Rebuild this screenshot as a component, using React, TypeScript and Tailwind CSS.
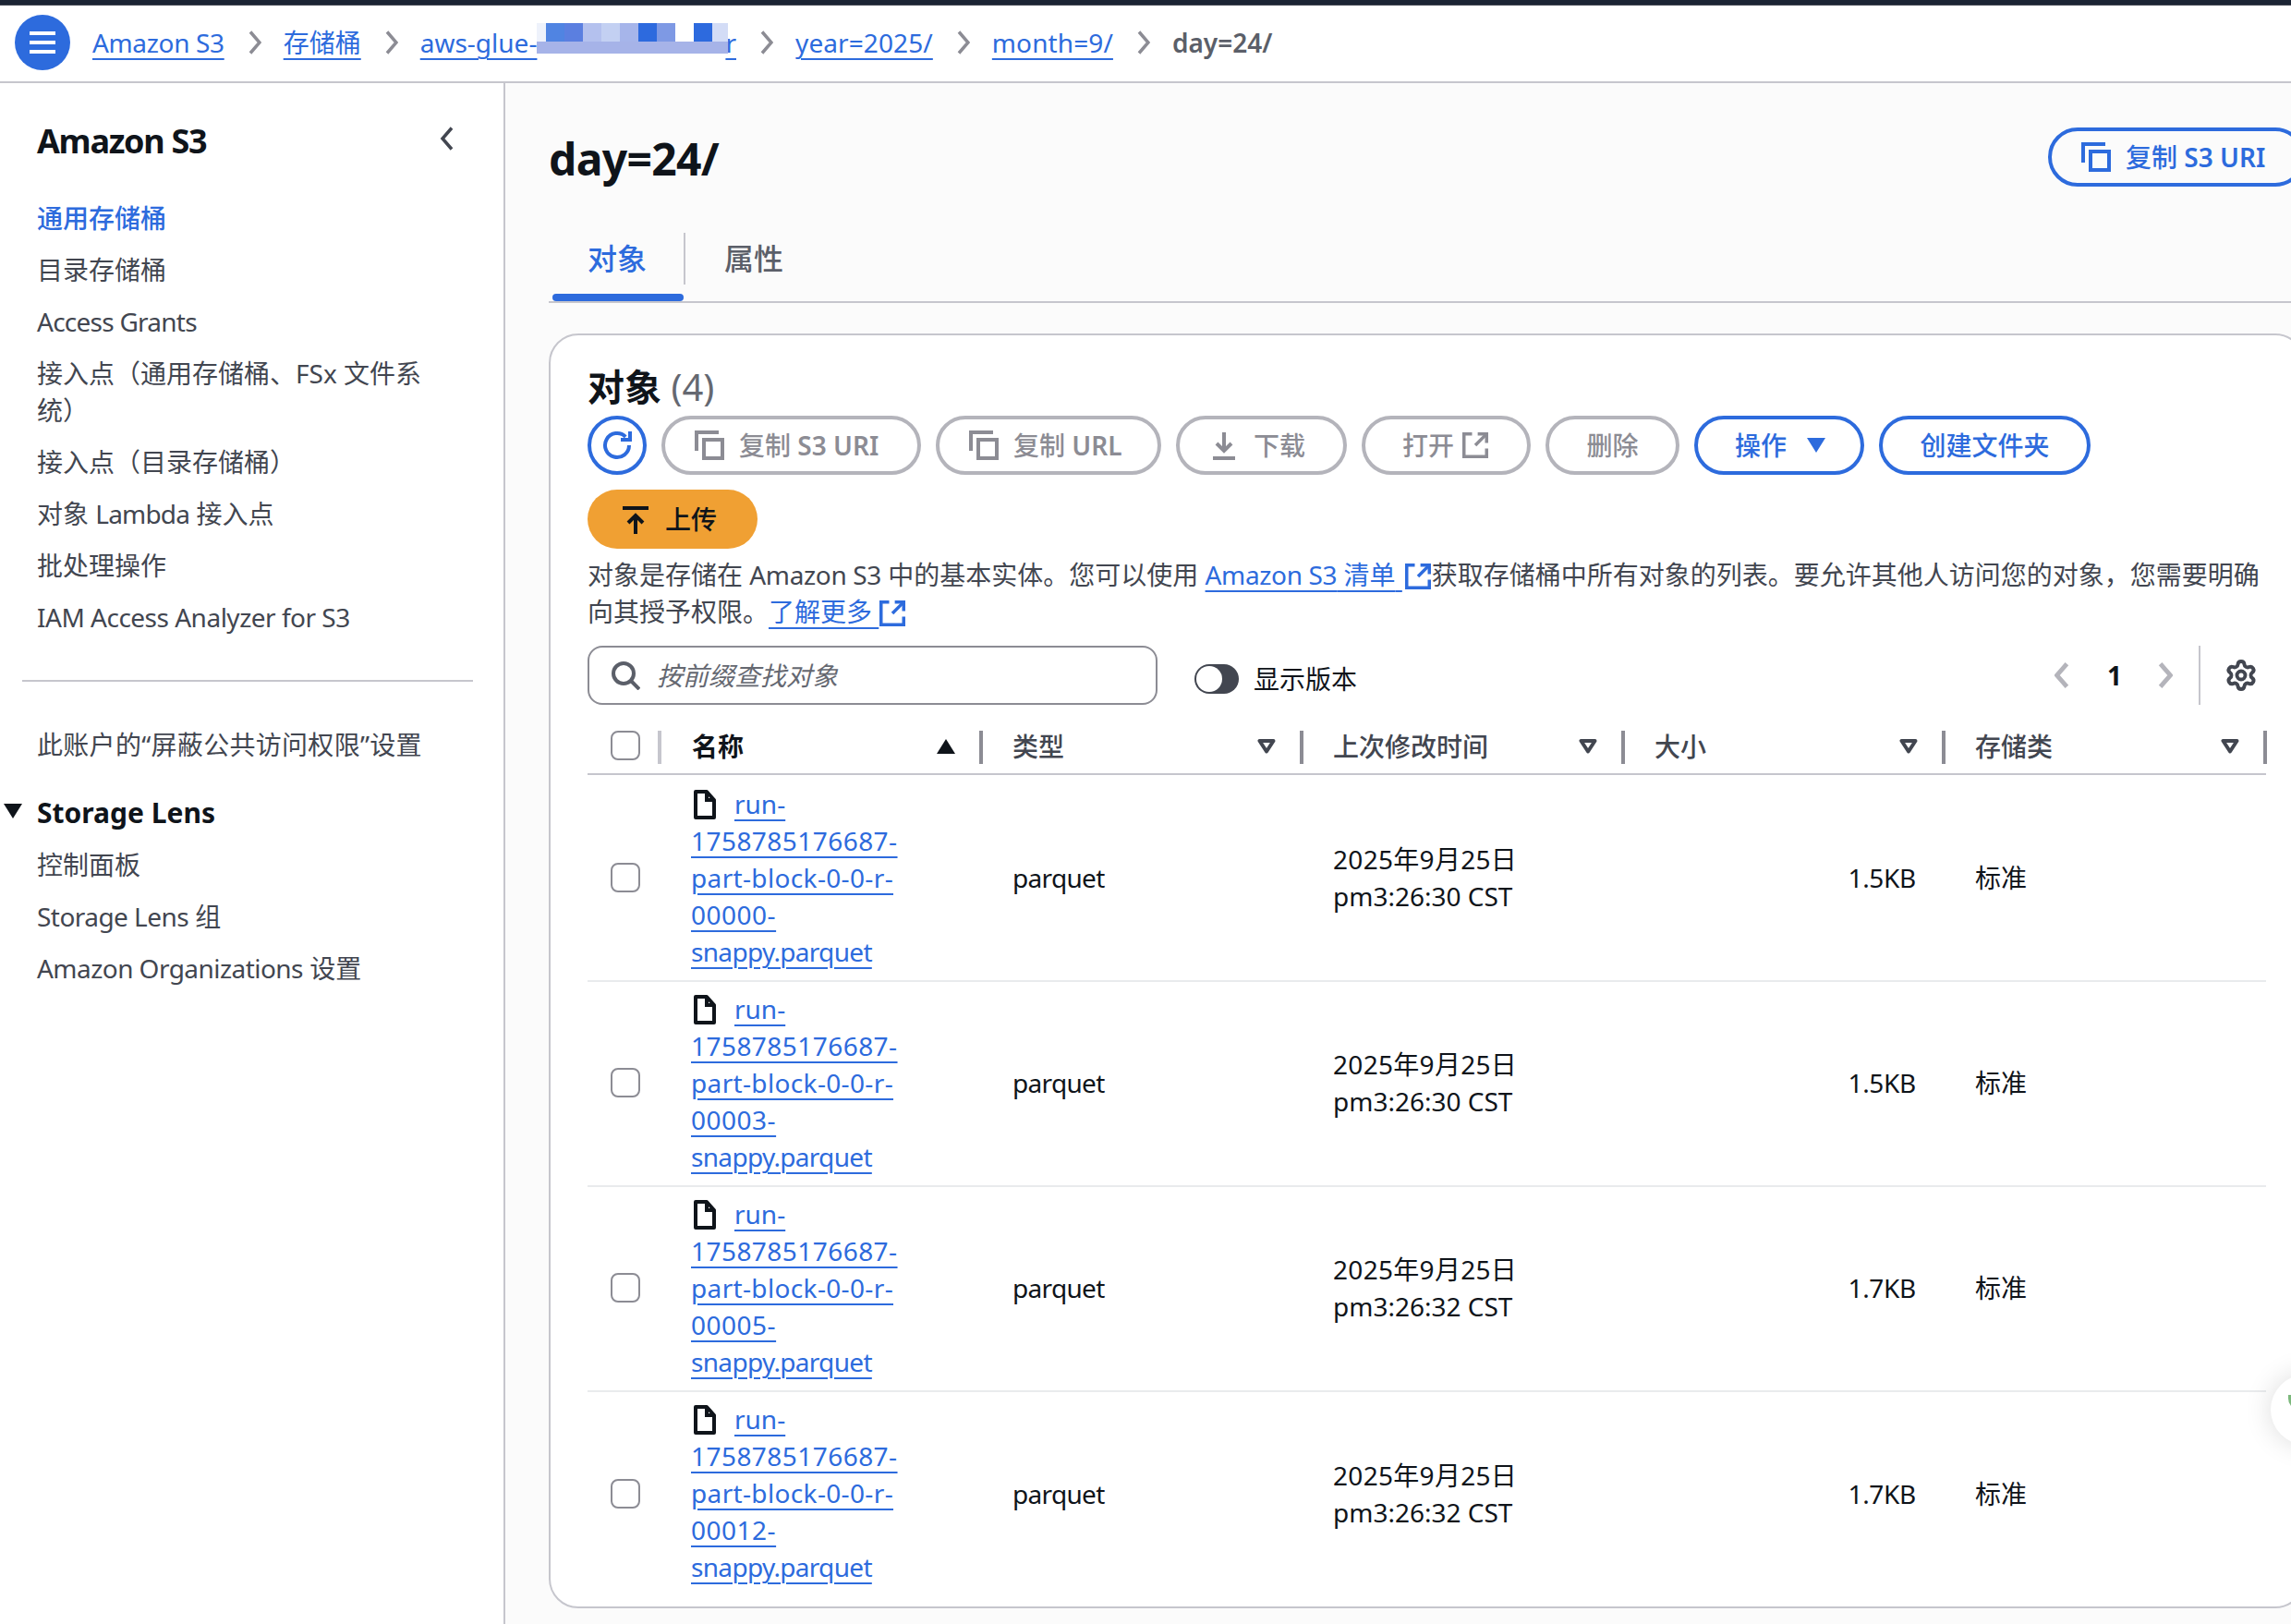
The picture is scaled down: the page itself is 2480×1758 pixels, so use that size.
import { Settings } from "lucide-react"

const rows = [
  { part: "00000", time: "pm3:26:30 CST", size: "1.5KB" },
  { part: "00003", time: "pm3:26:30 CST", size: "1.5KB" },
  { part: "00005", time: "pm3:26:32 CST", size: "1.7KB" },
  { part: "00012", time: "pm3:26:32 CST", size: "1.7KB" },
]

const columns = "grid grid-cols-[80px_348px_347px_348px_347px_348px]"
const linkText = "text-[#2d6bdd] underline decoration-2 underline-offset-[6px]"

function Chevron({ dir = "right", width = 3.5, className = "" }: { dir?: "left" | "right"; width?: number; className?: string }) {
  return (
    <svg viewBox="0 0 14 26" fill="none" stroke="currentColor" strokeWidth={width} className={className}>
      <path d={dir === "right" ? "M2 1.5 12 13 2 24.5" : "M12 1.5 2 13 12 24.5"} />
    </svg>
  )
}

function CopyIcon() {
  return (
    <svg viewBox="0 0 16 16" fill="none" stroke="currentColor" strokeWidth="2" className="w-8 h-8 shrink-0">
      <path d="M1 11V1h12" />
      <path d="M5 5h10v10H5z" />
    </svg>
  )
}

function ExternalIcon({ className = "" }: { className?: string }) {
  return (
    <svg viewBox="0 0 16 16" fill="none" stroke="currentColor" strokeWidth="2" className={className}>
      <path d="M6 1H1v14h14v-5" />
      <path d="M9.5 1H15v5.5" />
      <path d="M14.5 1.5 8 8" />
    </svg>
  )
}

function FilterCaret() {
  return (
    <svg viewBox="0 0 20 16" fill="none" stroke="currentColor" strokeWidth="4" className="w-5 h-4 text-[#424650] shrink-0">
      <path d="M2.5 2h15L10 13.5z" strokeLinejoin="round" />
    </svg>
  )
}

function Checkbox() {
  return <div className="w-8 h-8 rounded-lg border-2 border-[#8c8c94] bg-white" />
}

function OutlineButton({ disabled, className = "", children }: { disabled?: boolean; className?: string; children: React.ReactNode }) {
  return (
    <div
      className={`h-16 rounded-full border-4 flex items-center font-medium whitespace-nowrap ${
        disabled ? "border-[#b4b4bb] text-[#8c8c94]" : "border-[#2d6bdd] text-[#2d6bdd]"
      } ${className}`}
    >
      {children}
    </div>
  )
}

function Mosaic() {
  return (
    <span className="relative z-10 inline-flex flex-col mt-[-1px] h-[33px] w-[207px] shrink-0">
      <span className="flex h-5">
        <span className="w-[10px] bg-[#eef2fb]" />
        <span className="w-5 bg-[#5084e2]" />
        <span className="w-5 bg-[#5b7fe0]" />
        <span className="w-5 bg-[#b4c1ee]" />
        <span className="w-5 bg-[#c3d0f2]" />
        <span className="w-5 bg-[#a6b5ea]" />
        <span className="w-5 bg-[#2d6ade]" />
        <span className="w-5 bg-[#7e99e4]" />
        <span className="w-5 bg-white" />
        <span className="w-5 bg-[#2d6ade]" />
        <span className="w-[17px] bg-[#d3dcf6]" />
      </span>
      <span className="h-[13px] bg-[#a6b3e8]" />
    </span>
  )
}

function Sep() {
  return <Chevron className="w-[14px] h-[26px] ml-[26px] mr-6 text-[#8c8c94]" />
}

function Header() {
  return (
    <div className="h-[84px] shrink-0 bg-white border-b-2 border-[#c6c6cd] flex items-center pl-4 pb-[2px]">
      <div className="w-[60px] h-[60px] rounded-full bg-[#2d6bdd] flex flex-col items-center justify-center gap-[6px]">
        <span className="w-7 h-1 bg-white" />
        <span className="w-7 h-1 bg-white" />
        <span className="w-7 h-1 bg-white" />
      </div>
      <a className={`ml-6 tracking-[-0.35px] ${linkText}`}>Amazon S3</a>
      <Sep />
      <a className={linkText}>存储桶</a>
      <Sep />
      <a className={`${linkText} flex items-start h-10`}>
        aws-glue-
        <Mosaic />
        <span className="-ml-[3px]">r</span>
      </a>
      <Sep />
      <a className={`${linkText} tracking-[0.1px]`}>year=2025/</a>
      <Sep />
      <a className={`${linkText} tracking-[0.1px]`}>month=9/</a>
      <Sep />
      <span className="font-semibold text-[#5b5f69]">day=24/</span>
    </div>
  )
}

function Sidebar() {
  return (
    <aside className="w-[547px] shrink-0 bg-white border-r-2 border-[#c6c6cd] pl-10 pt-10 text-[#424650]">
      <div className="flex items-center justify-between w-[452px] h-11">
        <h2 className="text-[36px] leading-[44px] font-bold tracking-[-1.3px] text-[#0f141a] mt-[2px]">Amazon S3</h2>
        <Chevron dir="left" width={3.5} className="w-4 h-[26px] text-[#424650] mb-1" />
      </div>
      <nav className="mt-[42px] flex flex-col gap-4 w-[425px]">
        <a className="text-[#2d6bdd] font-medium">通用存储桶</a>
        <a>目录存储桶</a>
        <a className="tracking-[-0.75px]">Access Grants</a>
        <a>接入点（通用存储桶、FSx 文件系统）</a>
        <a>接入点（目录存储桶）</a>
        <a>
          对象 <span className="tracking-[-0.8px]">Lambda</span> 接入点
        </a>
        <a>批处理操作</a>
        <a className="tracking-[-0.5px]">IAM Access Analyzer for S3</a>
      </nav>
      <div className="mt-[48px] -ml-4 w-[488px] h-[2px] bg-[#c6c6cd]" />
      <a className="block mt-[48px] tracking-[0.3px]">此账户的“屏蔽公共访问权限”设置</a>
      <div className="mt-[34px] flex items-center -ml-9 font-bold text-[30px] text-[#0f141a]">
        <svg viewBox="0 0 20 16" className="w-5 h-4 mr-4 mb-1" fill="currentColor">
          <path d="M0 0h20L10 16z" />
        </svg>
        Storage Lens
      </div>
      <nav className="mt-4 flex flex-col gap-4">
        <a>控制面板</a>
        <a>
          <span className="tracking-[-0.55px]">Storage Lens</span> 组
        </a>
        <a>
          <span className="tracking-[-0.55px]">Amazon Organizations</span> 设置
        </a>
      </nav>
    </aside>
  )
}

function Toolbar() {
  return (
    <div className="flex flex-wrap gap-4 mt-[9px]">
      <div className="w-16 h-16 rounded-full border-4 border-[#2d6bdd] text-[#2d6bdd] flex items-center justify-center">
        <svg viewBox="0 0 16 16" fill="none" stroke="currentColor" strokeWidth="2" className="w-8 h-8">
          <path d="M14.5 8A6.5 6.5 0 1 1 12.6 3.4" />
          <path d="M10 5h5V.5" />
        </svg>
      </div>
      <OutlineButton disabled className="w-[281px] pl-8 gap-4">
        <CopyIcon />
        <span>
          复制 <span className="font-semibold">S3 URI</span>
        </span>
      </OutlineButton>
      <OutlineButton disabled className="w-[244px] pl-8 gap-4">
        <CopyIcon />
        <span>
          复制 <span className="font-semibold">URL</span>
        </span>
      </OutlineButton>
      <OutlineButton disabled className="w-[185px] pl-8 gap-4">
        <svg viewBox="0 0 16 16" fill="none" stroke="currentColor" strokeWidth="2" className="w-8 h-8 shrink-0">
          <path d="M2 15h12" />
          <path d="M8 1v10" />
          <path d="M4 7l4 4 4-4" />
        </svg>
        下载
      </OutlineButton>
      <OutlineButton disabled className="w-[183px] pl-10 gap-[9px]">
        打开
        <ExternalIcon className="w-7 h-7 shrink-0" />
      </OutlineButton>
      <OutlineButton disabled className="w-[145px] justify-center">
        删除
      </OutlineButton>
      <OutlineButton className="w-[184px] pl-10 gap-[22px]">
        操作
        <svg viewBox="0 0 20 16" className="w-5 h-4" fill="currentColor">
          <path d="M0 0h20L10 16z" />
        </svg>
      </OutlineButton>
      <OutlineButton className="w-[229px] justify-center">创建文件夹</OutlineButton>
      <div className="h-16 w-[184px] rounded-full bg-[#f0a033] flex items-center pl-9 gap-4 font-medium text-[#0f141a]">
        <svg viewBox="0 0 16 16" fill="none" stroke="currentColor" strokeWidth="2" className="w-8 h-8 shrink-0">
          <path d="M1 2h14" />
          <path d="M8 16V6" />
          <path d="M4 10l4-4 4 4" />
        </svg>
        上传
      </div>
    </div>
  )
}

function TableHead() {
  const heads = ["类型", "上次修改时间", "大小", "存储类"]
  return (
    <div className={`${columns} mt-7 h-12 border-b-2 border-[#c6c6cd] items-start font-medium text-[#424650]`}>
      <div className="h-9 pl-[25px] border-r-4 border-[#c6c6cd]">
        <Checkbox />
      </div>
      <div className="h-9 pl-[33px] pr-[26px] pb-[2px] border-r-4 border-[#8c8c94] flex items-center justify-between font-semibold text-[#0f141a]">
        名称
        <svg viewBox="0 0 20 16" className="w-5 h-4" fill="currentColor">
          <path d="M10 0l10 16H0z" />
        </svg>
      </div>
      {heads.map((head) => (
        <div key={head} className="h-9 pl-[32px] pr-[26px] pb-[2px] border-r-4 border-[#8c8c94] flex items-center justify-between">
          {head}
          <FilterCaret />
        </div>
      ))}
    </div>
  )
}

function TableRow({ part, time, size, last }: { part: string; time: string; size: string; last: boolean }) {
  const line = `block w-fit ${linkText}`
  return (
    <div className={`${columns} items-center h-[222px] pb-[3px] ${last ? "" : "border-b-2 border-[#e9ebed]"}`}>
      <div className="pl-[25px]">
        <Checkbox />
      </div>
      <div className="pl-[32px] self-start pt-[9px]">
        <div className="flex items-center h-10">
          <svg viewBox="0 0 24 32" fill="none" stroke="#0f141a" strokeWidth="4" className="ml-[3px] mr-5 w-6 h-8 mt-[2px]">
            <path d="M2 2h12l8 9v19H2z" strokeLinejoin="round" />
            <path d="M14 2v9h8" />
          </svg>
          <a className={line}>run-</a>
        </div>
        <a className={`${line} tracking-[0.45px]`}>1758785176687-</a>
        <a className={`${line} tracking-[0.35px]`}>part-block-0-0-r-</a>
        <a className={`${line} tracking-[0.5px]`}>{`${part}-`}</a>
        <a className={`${line} tracking-[-0.68px]`}>snappy.parquet</a>
      </div>
      <div className="pl-[32px] tracking-[-0.67px]">parquet</div>
      <div className="pl-[32px]">
        <div className="tracking-[0.3px]">2025年9月25日</div>
        <div>{time}</div>
      </div>
      <div className="pr-[32px] text-right tracking-[-0.3px]">{size}</div>
      <div className="pl-[32px]">标准</div>
    </div>
  )
}

function Main() {
  return (
    <main className="relative flex-1 min-w-0 overflow-hidden bg-[#fbfbfb] pl-[47px]">
      <div className="w-[1901px]">
        <div className="mt-[48px] flex items-center justify-between h-16">
          <h1 className="text-[48px] leading-[56px] font-bold tracking-[-0.7px] text-[#0f141a] mb-[-3px]">day=24/</h1>
          <OutlineButton className="w-[278px] pl-8 gap-[16px]">
            <CopyIcon />
            <span>
              复制 <span className="font-semibold">S3 URI</span>
            </span>
          </OutlineButton>
        </div>
        <div className="mt-[50px] flex h-[76px] border-b-2 border-[#c6c6cd]">
          <div className="ml-1 w-[144px] flex flex-col">
            <div className="h-14 pr-[2px] border-r-2 border-[#c6c6cd] flex items-center justify-center text-[32px] font-medium text-[#2d6bdd]">对象</div>
            <div className="mt-[10px] h-2 w-[142px] rounded-full bg-[#2d6bdd]" />
          </div>
          <div className="h-14 pl-[42px] flex items-center text-[32px] font-medium text-[#5b5f69]">属性</div>
        </div>

        <section className="mt-[33px] h-[1380px] rounded-[32px] border-2 border-[#c6c6cd] bg-white pl-10 pr-10 pt-[34px] text-[#0f141a]">
          <h2 className="text-[40px] leading-[44px] font-semibold">
            对象 <span className="font-normal text-[#656871]">(4)</span>
          </h2>
          <Toolbar />
          <div className="mt-2 text-[#424650]">
            <p className="whitespace-nowrap">
              对象是存储在 <span className="tracking-[-0.35px]">Amazon S3</span> 中的基本实体。您可以使用{" "}
              <a className={linkText}>
                <span className="tracking-[-0.35px]">Amazon S3</span> 清单{" "}
              </a>
              <ExternalIcon className="inline-block ml-[3px] mr-[1px] w-7 h-7 text-[#2d6bdd] align-[-5px]" />
              获取存储桶中所有对象的列表。要允许其他人访问您的对象，您需要明确
            </p>
            <p className="whitespace-nowrap">
              向其授予权限。
              <a className={linkText}>了解更多 </a>
              <ExternalIcon className="inline-block ml-[1px] w-7 h-7 text-[#2d6bdd] align-[-5px]" />
            </p>
          </div>
          <div className="mt-[17px] flex items-center">
            <div className="w-[617px] h-16 rounded-2xl border-2 border-[#8c8c94] bg-white flex items-center pl-[23px] gap-[18px]">
              <svg viewBox="0 0 16 16" fill="none" stroke="#5b5f69" strokeWidth="2" className="w-8 h-8 shrink-0">
                <circle cx="7" cy="7" r="5.5" />
                <path d="M11 11l4.5 4.5" />
              </svg>
              <span className="italic text-[#656871]">按前缀查找对象</span>
            </div>
            <div className="ml-[40px] mt-2 flex items-center gap-4">
              <div className="w-12 h-8 rounded-full bg-[#424650] flex items-center px-[2px]">
                <div className="w-7 h-7 rounded-full bg-white" />
              </div>
              显示版本
            </div>
            <div className="ml-auto flex items-center mr-[9px]">
              <Chevron dir="left" width={4.5} className="w-4 h-[28px] text-[#b4b4bb]" />
              <span className="ml-[41px] w-[55px] font-bold">1</span>
              <Chevron width={4.5} className="w-4 h-[28px] text-[#b4b4bb]" />
              <div className="ml-7 w-[2px] h-16 bg-[#c6c6cd]" />
              <Settings className="ml-[26px] w-9 h-9 text-[#424650]" strokeWidth={2.6} />
            </div>
          </div>
          <TableHead />
          <div className="pt-[2px]">
            {rows.map((row, i) => (
              <TableRow key={row.part} part={row.part} time={row.time} size={row.size} last={i === rows.length - 1} />
            ))}
          </div>
        </section>
      </div>

      {/* floating widget clipped by the window edge */}
      <div className="absolute left-[1911px] top-[1398px] w-[76px] h-[76px] rounded-full bg-white shadow-[0_0_30px_rgba(0,0,0,0.14)] overflow-hidden">
        <div className="absolute left-[19px] top-[22px] w-3 h-4 bg-[#7cb87c] rounded-bl-full" />
      </div>
    </main>
  )
}

export default function App() {
  return (
    <div className="w-[2480px] h-[1758px] overflow-hidden flex flex-col bg-white text-[28px] leading-10 font-['Noto_Sans','Noto_Sans_CJK_SC',sans-serif] text-[#0f141a]">
      <div className="h-[6px] shrink-0 bg-[#1b2433] border-b border-[#424650]" />
      <Header />
      <div className="flex flex-1 min-h-0">
        <Sidebar />
        <Main />
      </div>
    </div>
  )
}
